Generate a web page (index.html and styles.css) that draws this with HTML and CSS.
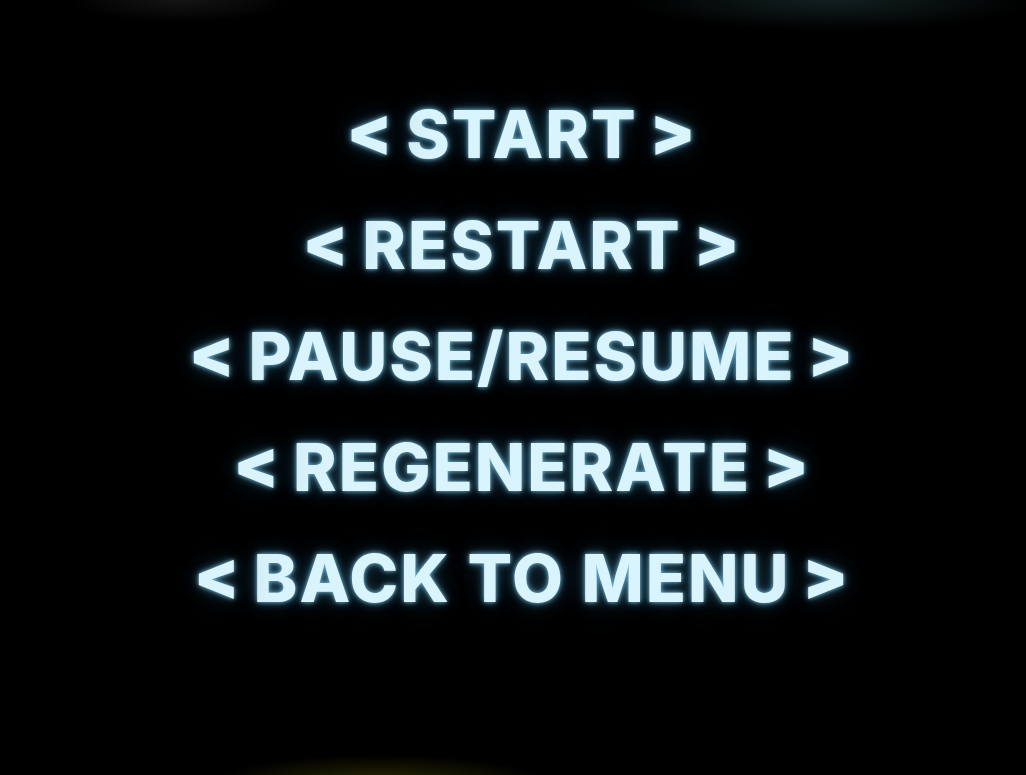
FILE: index.html
```html
<!DOCTYPE html>
<html lang="en">
<head>
<meta charset="utf-8">
<title>Menu</title>
<link rel="stylesheet" href="styles.css">
</head>
<body>
<main class="screen">
  <nav class="menu">
    <div class="item"><span class="chev">&lt;</span><span class="label">START</span><span class="chev">&gt;</span></div>
    <div class="item"><span class="chev">&lt;</span><span class="label">RESTART</span><span class="chev">&gt;</span></div>
    <div class="item"><span class="chev">&lt;</span><span class="label">PAUSE/RESUME</span><span class="chev">&gt;</span></div>
    <div class="item"><span class="chev">&lt;</span><span class="label">REGENERATE</span><span class="chev">&gt;</span></div>
    <div class="item"><span class="chev">&lt;</span><span class="label">BACK TO MENU</span><span class="chev">&gt;</span></div>
  </nav>
</main>
</body>
</html>
```
FILE: styles.css
```css
html, body {
  margin: 0;
  padding: 0;
  height: 100%;
  background: #000;
}
.screen {
  width: 1026px;
  height: 775px;
  overflow: hidden;
  background:
    radial-gradient(ellipse 200px 30px at 830px 0px, rgba(40,70,70,0.45), rgba(0,0,0,0) 100%),
    radial-gradient(ellipse 110px 22px at 180px 0px, rgba(60,60,60,0.35), rgba(0,0,0,0) 100%),
    radial-gradient(ellipse 170px 30px at 380px 785px, rgba(90,90,10,0.5), rgba(0,0,0,0) 100%),
    #000;
  display: flex;
  justify-content: center;
}
.menu {
  display: flex;
  flex-direction: column;
  align-items: center;
  padding-top: 78px;
  padding-left: 16px;
}
.item {
  display: flex;
  align-items: center;
  gap: 14px;
  font-family: Inter, "Liberation Sans", sans-serif;
  font-weight: 800;
  font-size: 66px;
  height: 111px;
  color: #d9f4fc;
  text-shadow:
    0 0 4px rgba(140,210,240,0.85),
    0 0 10px rgba(90,170,210,0.55),
    0 0 22px rgba(40,90,120,0.45),
    0 0 40px rgba(20,40,55,0.6);
  white-space: nowrap;
}
.label {
  letter-spacing: 2px;
  margin-right: -2px;
}
.chev {
  font-size: 66px;
  font-weight: 900;
  line-height: 1;
  position: relative;
  top: -3px;
}
```
